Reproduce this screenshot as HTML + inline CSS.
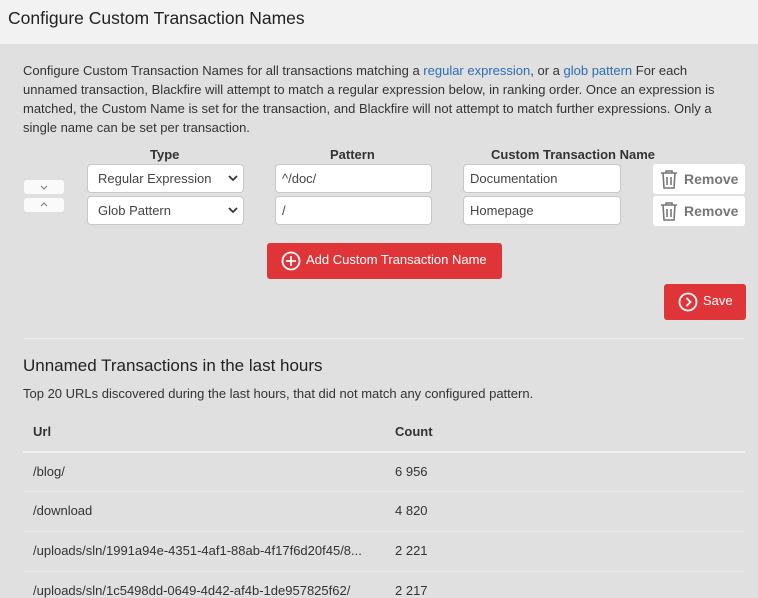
<!DOCTYPE html>
<html><head><meta charset="utf-8"><style>
*{box-sizing:border-box;margin:0;padding:0}
body{width:758px;height:591px;overflow:hidden;background:#e0e0e0;font-family:"Liberation Sans",sans-serif;color:#333;position:relative}
.a{position:absolute}
.hdr{left:0;top:0;width:758px;height:44px;background:#f2f2f2}
.inp{background:#fff;border:1px solid #c8c8c8;border-radius:4px;height:29px;font-size:13px;line-height:27px;padding-left:10px;color:#444}
.th{font-weight:bold;font-size:13px;color:#333}
.arr{background:#fafafa;border-radius:3px;width:40px;height:14px}
.rm{background:#fff;border-radius:3px;width:92px;height:30px;font-weight:bold;font-size:14px;color:#777;line-height:30px;padding-left:31px}
.btn{background:#e03538;border-radius:3px;color:#fff;font-size:13px}
.row{left:23px;width:722px;height:1px;background:#ececec}
.td{font-size:13px;color:#333}
a{color:#2c6fb3;text-decoration:none}
</style></head><body>
<div class="a hdr"></div>
<div class="a" style="left:8px;top:8px;font-size:17.5px;color:#222">Configure Custom Transaction Names</div>
<div class="a" style="left:23px;top:61px;width:720px;font-size:13px;line-height:19px;color:#333">Configure Custom Transaction Names for all transactions matching a <a>regular expression</a>, or a <a>glob pattern</a> For each unnamed transaction, Blackfire will attempt to match a regular expression below, in ranking order. Once an expression is matched, the Custom Name is set for the transaction, and Blackfire will not attempt to match further expressions. Only a single name can be set per transaction.</div>
<div class="a th" style="left:150px;top:147px">Type</div>
<div class="a th" style="left:330px;top:147px">Pattern</div>
<div class="a th" style="left:491px;top:147px">Custom Transaction Name</div>
<div class="a arr" style="left:24px;top:180px"><svg width="40" height="14"><path d="M40.5 0" /><path d="M17 6l3 3 3-3" fill="none" stroke="#777" stroke-width="1"/></svg></div>
<div class="a arr" style="left:24px;top:198px"><svg width="40" height="14"><path d="M17 8l3-3 3 3" fill="none" stroke="#777" stroke-width="1"/></svg></div>
<div class="a inp" style="left:87px;top:164px;width:157px">Regular Expression<svg style="position:absolute;right:5px;top:10px" width="10" height="7"><path d="M1 1l4 4 4-4" fill="none" stroke="#333" stroke-width="1.8"/></svg></div>
<div class="a inp" style="left:87px;top:196px;width:157px">Glob Pattern<svg style="position:absolute;right:5px;top:10px" width="10" height="7"><path d="M1 1l4 4 4-4" fill="none" stroke="#333" stroke-width="1.8"/></svg></div>
<div class="a inp" style="left:275px;top:164px;width:157px;padding-left:6px">^/doc/</div>
<div class="a inp" style="left:275px;top:196px;width:157px;padding-left:6px">/</div>
<div class="a inp" style="left:463px;top:164px;width:158px;padding-left:6px">Documentation</div>
<div class="a inp" style="left:463px;top:196px;width:158px;padding-left:6px">Homepage</div>
<div class="a rm" style="left:653px;top:164px">Remove</div>
<div class="a rm" style="left:653px;top:196px">Remove</div>
<svg class="a" style="left:659px;top:169px" width="20" height="21" viewBox="0 0 20 21" fill="none" stroke="#777" stroke-width="1.6"><path d="M2 4h16M7 4V2h6v2M4 4l1 15h10l1-15M8 8v8M12 8v8"/></svg>
<svg class="a" style="left:659px;top:201px" width="20" height="21" viewBox="0 0 20 21" fill="none" stroke="#777" stroke-width="1.6"><path d="M2 4h16M7 4V2h6v2M4 4l1 15h10l1-15M8 8v8M12 8v8"/></svg>
<div class="a btn" style="left:267px;top:243px;width:235px;height:36px;line-height:34px;padding-left:39px">Add Custom Transaction Name</div>
<svg class="a" style="left:281px;top:251px" width="20" height="20" viewBox="0 0 20 20" fill="none" stroke="#fff" stroke-width="1.8"><circle cx="10" cy="10" r="8.5"/><path d="M10 5v10M5 10h10"/></svg>
<div class="a btn" style="left:664px;top:284px;width:82px;height:36px;line-height:34px;padding-left:39px">Save</div>
<svg class="a" style="left:678px;top:292px" width="20" height="20" viewBox="0 0 20 20" fill="none" stroke="#fff" stroke-width="1.8"><circle cx="10" cy="10" r="8.5"/><path d="M8.5 6l4 4-4 4"/></svg>
<div class="a row" style="top:338px"></div>
<div class="a" style="left:23px;top:356px;font-size:17px;color:#222">Unnamed Transactions in the last hours</div>
<div class="a" style="left:23px;top:386px;font-size:13px">Top 20 URLs discovered during the last hours, that did not match any configured pattern.</div>
<div class="a th" style="left:33px;top:424px">Url</div>
<div class="a th" style="left:395px;top:424px">Count</div>
<div class="a row" style="top:451px;height:2px;background:#f0f0f0"></div>
<div class="a td" style="left:33px;top:464px">/blog/</div><div class="a td" style="left:395px;top:464px">6 956</div>
<div class="a row" style="top:491px"></div>
<div class="a td" style="left:33px;top:503px">/download</div><div class="a td" style="left:395px;top:503px">4 820</div>
<div class="a row" style="top:531px"></div>
<div class="a td" style="left:33px;top:543px">/uploads/sln/1991a94e-4351-4af1-88ab-4f17f6d20f45/8...</div><div class="a td" style="left:395px;top:543px">2 221</div>
<div class="a row" style="top:571px"></div>
<div class="a td" style="left:33px;top:583px">/uploads/sln/1c5498dd-0649-4d42-af4b-1de957825f62/</div><div class="a td" style="left:395px;top:583px">2 217</div>
</body></html>
